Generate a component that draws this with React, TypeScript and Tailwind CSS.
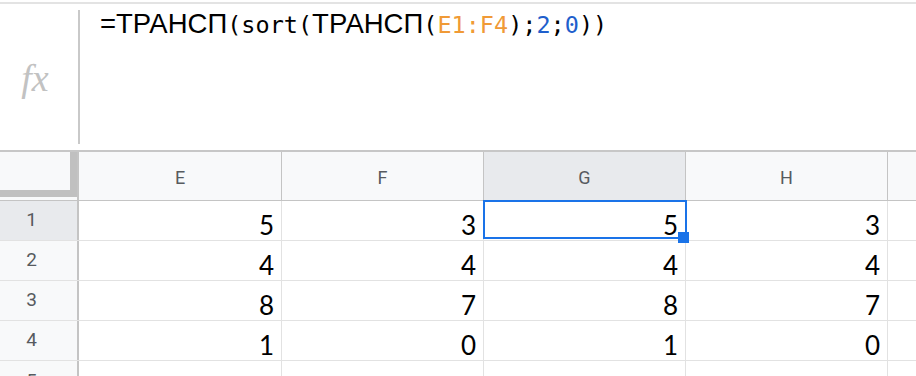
import React from "react";

const cols = ["E", "F", "G", "H"];
const widths = ["w-[203px]", "w-[202px]", "w-[202px]", "w-[202px]"];
const rows = [
  [5, 3, 5, 3],
  [4, 4, 4, 4],
  [8, 7, 8, 7],
  [1, 0, 1, 0],
];

const mono = "font-['DejaVu_Sans_Mono',monospace] text-[23.5px]";
const sans = "font-['Liberation_Sans',sans-serif] text-[27.5px]";

function FormulaBar() {
  return (
    <div className="flex h-[150px] shrink-0 border-t-2 border-b-2 border-t-[#e3e3e3] border-b-[#c7c7c7]">
      <div className="w-[78px] flex items-center justify-center pr-[8px] pt-[2px]">
        <span className="font-['Liberation_Serif',serif] italic text-[38px] text-[#c2c2c2]">fx</span>
      </div>
      <div className="w-[2px] my-[6px] bg-[#c9c9c9]" />
      <div className="pl-[20px] pt-[5px] leading-[30px] text-black whitespace-nowrap">
        <span className={sans}>=ТРАНСП</span>
        <span className={mono}>(sort(</span>
        <span className={sans}>ТРАНСП</span>
        <span className={mono}>(</span>
        <span className={`${mono} text-[#f09a36]`}>E1:F4</span>
        <span className={mono}>);</span>
        <span className={`${mono} text-[#1f5fcc]`}>2</span>
        <span className={mono}>;</span>
        <span className={`${mono} text-[#1f5fcc]`}>0</span>
        <span className={mono}>))</span>
      </div>
    </div>
  );
}

function HeaderRow() {
  return (
    <div className="flex h-[49px] shrink-0 border-b border-[#c4c4c4] bg-[#f8f9fa]">
      <div className="w-[79px] shrink-0 border-r-2 border-[#c4c4c4]">
        <div className="h-[45px] w-full border-r-[7px] border-b-[7px] border-[#c0c0c0]" />
      </div>
      {cols.map((c, i) => (
        <div
          key={c}
          className={`${widths[i]} shrink-0 border-r border-[#c4c4c4] flex items-center justify-center pt-[2px] font-['Roboto',sans-serif] text-[18px] text-[#575b5f] ${c === "G" ? "bg-[#e8eaed]" : ""}`}
        >
          {c}
        </div>
      ))}
      <div className="flex-1" />
    </div>
  );
}

function Row({ n, values }: { n: number; values: number[] }) {
  return (
    <div className="flex h-[40px] shrink-0 border-b border-[#e2e2e2]">
      <div
        className={`w-[79px] shrink-0 border-r-2 border-[#c4c4c4] flex items-center justify-center pr-[14px] font-['Roboto',sans-serif] text-[19px] text-[#575b5f] ${n === 1 ? "bg-[#e8eaed]" : "bg-[#f8f9fa]"}`}
      >
        {n}
      </div>
      {values.map((v, i) => (
        <div
          key={i}
          className={`${widths[i]} shrink-0 border-r border-[#e2e2e2] flex items-end justify-end pr-[7px] pb-[2px] font-['Lato',sans-serif] text-[26px] leading-none text-black ${n === 1 && i === 2 ? "relative" : ""}`}
        >
          {v}
          {n === 1 && i === 2 && (
            <>
              <div className="absolute -left-[1px] -top-[1px] w-[204px] h-[39px] border-2 border-[#1a73e8] pointer-events-none" />
              <div className="absolute left-[194px] top-[31px] w-[11px] h-[11px] bg-[#1a73e8] z-10" />
            </>
          )}
        </div>
      ))}
      <div className="flex-1" />
    </div>
  );
}

export default function App() {
  return (
    <div className="w-[916px] h-[376px] overflow-hidden bg-white flex flex-col">
      <div className="h-[2px] shrink-0" />
      <FormulaBar />
      <HeaderRow />
      {rows.map((r, i) => (
        <Row key={i} n={i + 1} values={r} />
      ))}
      <div className="flex h-[40px] shrink-0">
        <div className="w-[79px] shrink-0 border-r-2 border-[#c4c4c4] bg-[#f8f9fa] flex items-center justify-center pr-[14px] font-['Roboto',sans-serif] text-[19px] text-[#575b5f]">
          5
        </div>
        {widths.map((w, i) => (
          <div key={i} className={`${w} shrink-0 border-r border-[#e2e2e2]`} />
        ))}
        <div className="flex-1" />
      </div>
    </div>
  );
}
